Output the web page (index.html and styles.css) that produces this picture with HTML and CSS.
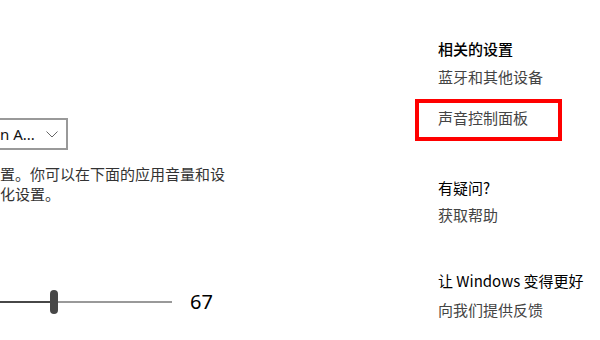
FILE: index.html
```html
<!DOCTYPE html>
<html lang="zh-CN">
<head>
<meta charset="utf-8">
<link rel="stylesheet" href="styles.css">
</head>
<body>
<div class="page">
  <main class="main">
    <div class="dropdown">
      <span class="dd-text">n A...</span>
      <svg class="chev" width="12" height="7" viewBox="0 0 12 7"><path d="M0.5 0.5 L6 6 L11.5 0.5" fill="none" stroke="#666" stroke-width="1"/></svg>
    </div>
    <p class="desc"><span class="line">置。你可以在下面的应用音量和设</span><span class="line">化设置。</span></p>
    <div class="slider-row">
      <div class="slider">
        <div class="track-on"></div>
        <div class="thumb"></div>
        <div class="track-off"></div>
      </div>
      <span class="value">67</span>
    </div>
  </main>
  <aside class="side">
    <h2 class="heading h-related">相关的设置</h2>
    <a class="link l-bt">蓝牙和其他设备</a>
    <div class="highlight"><a class="link">声音控制面板</a></div>
    <h2 class="heading h-q">有疑问?</h2>
    <a class="link l-help">获取帮助</a>
    <h2 class="heading h-better">让 Windows 变得更好</h2>
    <a class="link l-fb">向我们提供反馈</a>
  </aside>
</div>
</body>
</html>
```
FILE: styles.css
```css
html, body {
  margin: 0;
  padding: 0;
  background: #fff;
}
body {
  width: 600px;
  height: 340px;
  overflow: hidden;
  font-family: "Noto Sans CJK SC", "Noto Sans", sans-serif;
  font-size: 15px;
  line-height: 20px;
  color: #000;
}
.page {
  display: flex;
  width: 600px;
  height: 340px;
}
.main {
  width: 415px;
  flex: none;
  overflow: hidden;
  padding-top: 118px;
  box-sizing: border-box;
}
.dropdown {
  box-sizing: border-box;
  margin-left: -20px;
  width: 88px;
  height: 32px;
  border: 2px solid #999;
  display: flex;
  align-items: center;
  justify-content: space-between;
  padding: 0 8px 0 18px;
}
.dd-text {
  font-family: "Noto Sans", "Noto Sans CJK SC", sans-serif;
  font-size: 15px;
  color: #111;
  white-space: nowrap;
}
.chev {
  display: block;
  margin-top: 1px;
}
.desc {
  margin: 14px 0 0 0;
  color: #333;
  font-size: 15px;
  line-height: 20px;
}
.line {
  display: block;
  white-space: nowrap;
}
.slider-row {
  margin-top: 86px;
  display: flex;
  align-items: center;
  height: 24px;
}
.slider {
  display: flex;
  align-items: center;
  width: 172px;
  height: 24px;
}
.track-on {
  width: 50px;
  height: 2px;
  background: #474747;
}
.thumb {
  width: 8px;
  height: 24px;
  border-radius: 4px;
  background: #474747;
}
.track-off {
  flex: 1;
  height: 2px;
  background: #999;
}
.value {
  margin-left: 18px;
  font-family: "Noto Sans", sans-serif;
  font-size: 20px;
  line-height: 24px;
  color: #000;
}
.side {
  display: flex;
  flex-direction: column;
  align-items: flex-start;
  padding-top: 39px;
}
.heading {
  margin: 0;
  padding-left: 23px;
  font-size: 15px;
  line-height: 20px;
  font-weight: normal;
  color: #000;
  white-space: nowrap;
}
.h-related {
  font-weight: 500;
}
.link {
  display: block;
  padding-left: 23px;
  color: #444;
  white-space: nowrap;
}
.l-bt { margin-top: 8px; }
.highlight {
  box-sizing: border-box;
  margin-top: 12px;
  width: 147px;
  height: 42px;
  border: 4px solid #f00;
  padding-top: 5px;
}
.highlight .link {
  padding-left: 19px;
}
.h-q { margin-top: 37px; }
.l-help { margin-top: 7px; }
.h-better { margin-top: 46px; }
.l-fb { margin-top: 9px; }
```
